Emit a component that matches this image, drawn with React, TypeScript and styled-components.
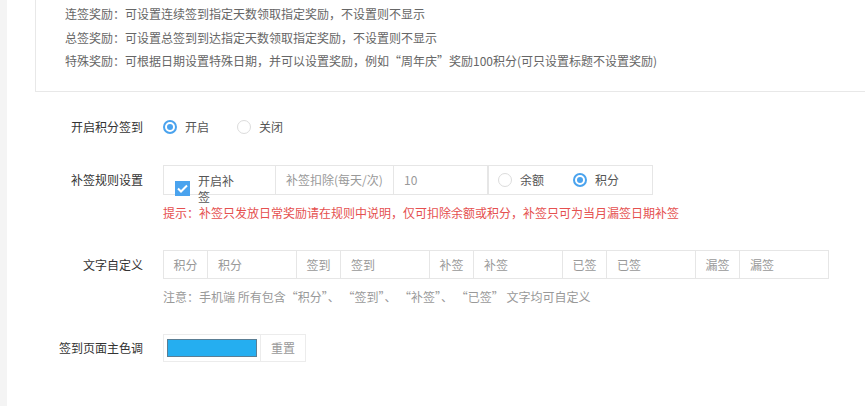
import styled, { createGlobalStyle } from 'styled-components';

const GlobalStyle = createGlobalStyle`
    html, body {
        margin : 0;
        padding : 0;
        background : #f4f4f4;
        font-family : "Noto Sans CJK SC", "Noto Sans", sans-serif;
        font-size : 12px;
        color : #333;
    }
`;

const Page = styled.div`
    margin-left : 7px;
    height : 406px;
    background : #fff;
    overflow : hidden;
`;

const InfoCard = styled.div`
    margin-left : 28px;
    padding : 2px 0 18px 29px;
    border-left : 1px solid #e8e8e8;
    border-bottom : 1px solid #e8e8e8;
    color : #666;
    line-height : 23.5px;
`;

const Row = styled.div<{ $top: number; $start?: boolean }>`
    display : flex;
    align-items : ${p => p.$start ? 'flex-start' : 'center'};
    gap : 20px;
    margin-top : ${p => p.$top}px;
`;

const Label = styled.div<{ $lh?: number }>`
    width : 136px;
    flex : none;
    text-align : right;
    color : #333;
    line-height : ${p => p.$lh ? `${p.$lh}px` : 'normal'};
`;

const Field = styled.div`
    display : flex;
    flex-direction : column;
`;

const RadioGroup = styled.div<{ $boxed?: boolean }>`
    display : flex;
    align-items : center;
    height : 30px;
    padding : ${p => p.$boxed ? '0 0 0 9px' : '0'};
    width : ${p => p.$boxed ? '165px' : 'auto'};
    border : ${p => p.$boxed ? '1px solid #e6e6e6' : 'none'};
    box-sizing : border-box;
`;

const RadioItem = styled.label<{ $gap: number }>`
    display : flex;
    align-items : center;
    gap : 8px;
    margin-right : ${p => p.$gap}px;
    color : #555;
`;

const RadioDot = styled.span<{ $on?: boolean }>`
    width : 14px;
    height : 14px;
    border-radius : 50%;
    box-sizing : border-box;
    border : ${p => p.$on ? '2px solid #4aa3ee' : '1px solid #dcdcdc'};
    position : relative;
    &::after{
        content : '';
        display : ${p => p.$on ? 'block' : 'none'};
        position : absolute;
        left : 2px;
        top : 2px;
        width : 6px;
        height : 6px;
        border-radius : 50%;
        background : #4aa3ee;
    }
`;

const Group = styled.div<{ $h: number }>`
    display : flex;
    height : ${p => p.$h}px;
`;

const Cell = styled.div<{ $w: number; $center?: boolean }>`
    width : ${p => p.$w}px;
    flex : none;
    box-sizing : border-box;
    border : 1px solid #e6e6e6;
    margin-left : -1px;
    display : flex;
    align-items : center;
    justify-content : ${p => p.$center ? 'center' : 'flex-start'};
    padding : ${p => p.$center ? '0' : '0 10px'};
    color : #999;
    &:first-child{
        margin-left : 0;
    }
`;

const CheckCell = styled.div`
    width : 113px;
    box-sizing : border-box;
    border : 1px solid #e6e6e6;
    border-right : none;
    display : flex;
    align-items : flex-start;
    padding : 7px 0 0 11px;
    gap : 8px;
    height : 30px;
    overflow : visible;
`;

const CheckBox = styled.span`
    width : 15px;
    height : 15px;
    margin-top : 8px;
    background : #4aa3ee;
    display : flex;
    align-items : center;
    justify-content : center;
    flex : none;
`;

const CheckText = styled.span`
    width : 40px;
    line-height : 16px;
    color : #555;
    position : relative;
    z-index : 1;
`;

const Hint = styled.div<{ $red?: boolean; $top: number }>`
    margin-top : ${p => p.$top}px;
    line-height : 18px;
    white-space : pre;
    color : ${p => p.$red ? '#e5504f' : '#999'};
`;

const ColorBox = styled.div`
    width : 98px;
    height : 28px;
    box-sizing : border-box;
    border : 1px solid #ececec;
    padding : 4px 3px;
`;

const Swatch = styled.div`
    height : 100%;
    background : #25aef0;
    border : 1px solid #5b7e94;
    box-sizing : border-box;
`;

const ResetButton = styled.div`
    width : 45px;
    height : 28px;
    box-sizing : border-box;
    border : 1px solid #ececec;
    border-left : none;
    display : flex;
    align-items : center;
    justify-content : center;
    color : #999;
`;

const words = ['积分', '签到', '补签', '已签', '漏签'];

const App = () =>{
    return(
        <>
            <GlobalStyle/>
            <Page>
                <InfoCard>
                    <div>连签奖励：可设置连续签到指定天数领取指定奖励，不设置则不显示</div>
                    <div>总签奖励：可设置总签到到达指定天数领取指定奖励，不设置则不显示</div>
                    <div>特殊奖励：可根据日期设置特殊日期，并可以设置奖励，例如“周年庆”奖励100积分(可只设置标题不设置奖励)</div>
                </InfoCard>

                <Row $top={20}>
                    <Label>开启积分签到</Label>
                    <RadioGroup>
                        <RadioItem $gap={28}><RadioDot $on/>开启</RadioItem>
                        <RadioItem $gap={0}><RadioDot/>关闭</RadioItem>
                    </RadioGroup>
                </Row>

                <Row $top={23} $start>
                    <Label $lh={30}>补签规则设置</Label>
                    <Field>
                        <Group $h={30}>
                            <CheckCell>
                                <CheckBox>
                                    <svg width="11" height="9" viewBox="0 0 11 9">
                                        <path d="M1 4.5 L4 7.5 L10 1.5" stroke="#fff" strokeWidth="2" fill="none"/>
                                    </svg>
                                </CheckBox>
                                <CheckText>开启补签</CheckText>
                            </CheckCell>
                            <Cell $w={119}>补签扣除(每天/次)</Cell>
                            <Cell $w={95}>10</Cell>
                            <RadioGroup $boxed>
                                <RadioItem $gap={29}><RadioDot/>余额</RadioItem>
                                <RadioItem $gap={0}><RadioDot $on/>积分</RadioItem>
                            </RadioGroup>
                        </Group>
                        <Hint $red $top={9}>提示：补签只发放日常奖励请在规则中说明，仅可扣除余额或积分，补签只可为当月漏签日期补签</Hint>
                    </Field>
                </Row>

                <Row $top={28} $start>
                    <Label $lh={29}>文字自定义</Label>
                    <Field>
                        <Group $h={29}>
                            {words.map(w => [
                                <Cell key={w + 'a'} $w={45} $center>{w}</Cell>,
                                <Cell key={w + 'b'} $w={90}>{w}</Cell>
                            ])}
                        </Group>
                        <Hint $top={9}>{'注意：手机端 所有包含“积分”、 “签到”、 “补签”、 “已签” 文字均可自定义'}</Hint>
                    </Field>
                </Row>

                <Row $top={28}>
                    <Label>签到页面主色调</Label>
                    <Group $h={28}>
                        <ColorBox><Swatch/></ColorBox>
                        <ResetButton>重置</ResetButton>
                    </Group>
                </Row>
            </Page>
        </>
    )
}

export default App;
